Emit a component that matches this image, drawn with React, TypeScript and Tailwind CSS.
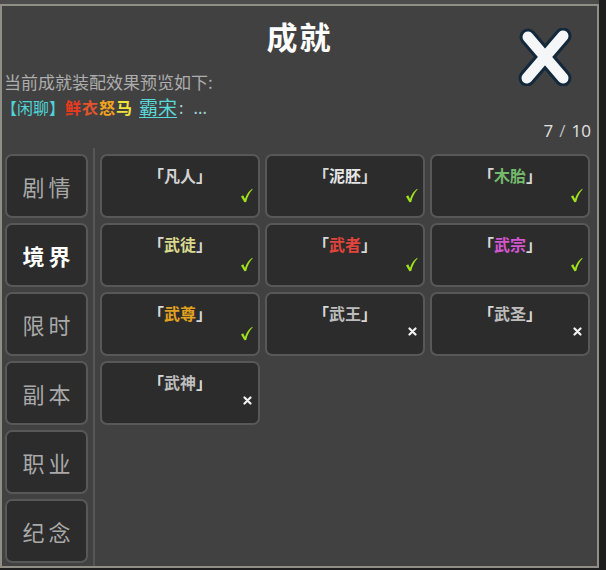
import React from "react"

type Badge = { name: string; color: string; owned: boolean }

const tabs = ["剧情", "境界", "限时", "副本", "职业", "纪念"]

const badges: Badge[] = [
    { name: "凡人", color: "text-[#d2d2d2]", owned: true },
    { name: "泥胚", color: "text-[#e6e6e6]", owned: true },
    { name: "木胎", color: "text-[#74b96c]", owned: true },
    { name: "武徒", color: "text-[#d9d98e]", owned: true },
    { name: "武者", color: "text-[#e2443c]", owned: true },
    { name: "武宗", color: "text-[#d455d0]", owned: true },
    { name: "武尊", color: "text-[#e3a21e]", owned: true },
    { name: "武王", color: "text-[#bdbdbd]", owned: false },
    { name: "武圣", color: "text-[#bdbdbd]", owned: false },
    { name: "武神", color: "text-[#bdbdbd]", owned: false },
]

const cjk = "font-['Noto_Sans_CJK_SC','Noto_Sans',sans-serif]"

function Check() {
    return (
        <svg width="13" height="15" viewBox="0 0 13 15">
            <path d="M1 8.5 L3.2 7.2 L5 11 C6.5 6.5 8.8 3 12.2 0.8 L12.6 1.6 C9.8 4.4 7.6 8.6 6.2 14 L4.4 14.2 Z" fill="#9fe21c" />
        </svg>
    )
}

function Cross() {
    return (
        <svg width="9" height="9" viewBox="0 0 9 9">
            <path d="M1.5 1.5 L7.5 7.5 M7.5 1.5 L1.5 7.5" stroke="#f2f2f2" strokeWidth="2.2" strokeLinecap="round" />
        </svg>
    )
}

function CloseIcon() {
    return (
        <svg width="56" height="58" viewBox="0 0 56 58">
            <g strokeLinecap="round" fill="none">
                <path d="M11 9 L46 50 M46 8 L10 50" stroke="#13283a" strokeWidth="17" />
                <path d="M11 9 L46 50 M46 8 L10 50" stroke="#f4f6f8" strokeWidth="11" />
            </g>
        </svg>
    )
}

export default function App() {
    return (
        <div className={`w-[606px] h-[570px] bg-[#1e1e1e] ${cjk}`}>
            <div className="h-1 w-[599px] bg-[#4c4c4c]" />
            <div className="w-[599px] h-[564px] border-2 border-[#8f8f87] bg-[#414141] flex flex-col">
                {/* Header */}
                <div className="relative h-[58px] flex justify-center pt-[10px]">
                    <h1 className="text-[31px] leading-[40px] font-bold text-white tracking-[2px]">成就</h1>
                    <button type="button" className="absolute right-[24px] top-[22px]" aria-label="close">
                        <CloseIcon />
                    </button>
                </div>

                {/* Preview */}
                <div className="pl-[2px] mt-[7px]">
                    <p className="text-[17px] leading-[22px] text-[#adadad]">当前成就装配效果预览如下:</p>
                    <p className="mt-[2px] flex items-end text-[15px] leading-[24px]">
                        <span className="text-[#4fd3d6] text-[16px] -ml-[3px]">【闲聊】</span>
                        <span className="font-bold text-[16px] tracking-[1px]">
                            <span className="text-[#ec3a1e]">鲜</span>
                            <span className="text-[#e4542c]">衣</span>
                            <span className="text-[#f0a21c]">怒</span>
                            <span className="text-[#f2e23a]">马</span>
                        </span>
                        <span className="ml-[6px] text-[19px] text-[#5ad9da] underline underline-offset-2">霸宋</span>
                        <span className="text-[#9fd4d6] ml-[2px] text-[16px]">:</span>
                        <span className="text-[#9fd4d6] ml-[10px] text-[16px]">...</span>
                    </p>
                </div>

                <div className="flex justify-end pr-[6px] mt-[1px] text-[17px] leading-[22px] text-[#e2e2e2] font-['Open_Sans',sans-serif]">
                    7 <span className="mx-[6px] text-[#bcbcbc]">/</span> 10
                </div>

                {/* Body */}
                <div className="flex flex-1 mt-[6px]">
                    <div className="w-[91px] pl-[3px] pt-[6px] flex flex-col gap-[5px]">
                        {tabs.map((t) => {
                            const active = t === "境界"
                            return (
                                <div
                                    key={t}
                                    className={`h-[64px] w-[83px] rounded-[7px] border-2 border-[#585858] bg-[#2c2c2c] flex items-center justify-center text-[22px] tracking-[4px] pl-[4px] ${
                                        active ? "text-white font-bold" : "text-[#a9a9a9]"
                                    }`}
                                >
                                    {t}
                                </div>
                            )
                        })}
                    </div>
                    <div className="w-[2px] bg-[#565656]" />
                    <div className="pl-[5px] pt-[6px]">
                        <div className="grid grid-cols-[160px_160px_160px] auto-rows-[64px] gap-[5px]">
                            {badges.map((b) => (
                                <div
                                    key={b.name}
                                    className="relative rounded-[7px] border-2 border-[#585858] bg-[#2c2c2c] flex justify-center pt-[8px]"
                                >
                                    <span className="text-[16px] leading-[22px] font-bold text-[#d8d8d8]">
                                        「<span className={b.color}>{b.name}</span>」
                                    </span>
                                    <span className={`absolute ${b.owned ? "right-[5px] bottom-[13px]" : "right-[6px] bottom-[18px]"}`}>
                                        {b.owned ? <Check /> : <Cross />}
                                    </span>
                                </div>
                            ))}
                        </div>
                    </div>
                </div>
            </div>
        </div>
    )
}
